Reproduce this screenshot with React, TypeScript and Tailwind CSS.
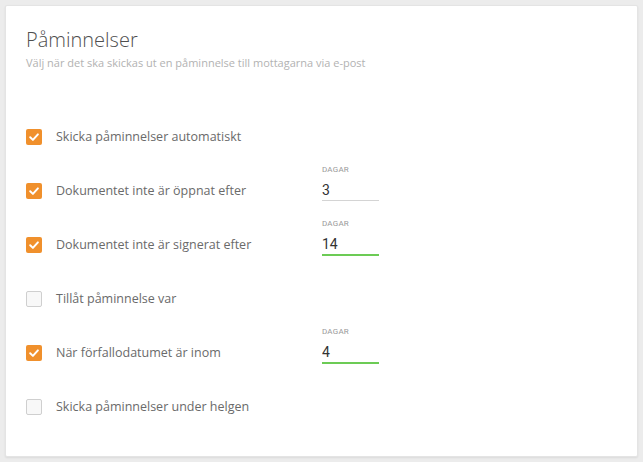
import { useState } from "react"

type Reminder = {
  id: string
  label: string
  checked: boolean
  days?: string
  active?: boolean
}

const initialReminders: Reminder[] = [
  { id: "auto", label: "Skicka påminnelser automatiskt", checked: true },
  { id: "opened", label: "Dokumentet inte är öppnat efter", checked: true, days: "3" },
  { id: "signed", label: "Dokumentet inte är signerat efter", checked: true, days: "14", active: true },
  { id: "every", label: "Tillåt påminnelse var", checked: false },
  { id: "due", label: "När förfallodatumet är inom", checked: true, days: "4", active: true },
  { id: "weekend", label: "Skicka påminnelser under helgen", checked: false },
]

function Checkbox({ checked, onChange }: { checked: boolean; onChange: () => void }) {
  return (
    <button
      type="button"
      role="checkbox"
      aria-checked={checked}
      onClick={onChange}
      className={
        checked
          ? "flex h-4 w-4 shrink-0 items-center justify-center rounded-[2px] bg-[#f0902c]"
          : "flex h-4 w-4 shrink-0 items-center justify-center rounded-[2px] border border-[#cfcfcf] bg-[#f8f8f8]"
      }
    >
      {checked ? (
        <svg viewBox="0 0 16 16" className="h-4 w-4" aria-hidden>
          <path
            d="M4.2 8.3 L6.9 10.9 L11.9 5.4"
            fill="none"
            stroke="#fff"
            strokeWidth="2"
            strokeLinecap="round"
            strokeLinejoin="round"
          />
        </svg>
      ) : null}
    </button>
  )
}

export default function App() {
  const [reminders, setReminders] = useState(initialReminders)

  function toggle(id: string) {
    setReminders((list) => list.map((r) => (r.id === id ? { ...r, checked: !r.checked } : r)))
  }

  function setDays(id: string, days: string) {
    setReminders((list) => list.map((r) => (r.id === id ? { ...r, days } : r)))
  }

  return (
    <div className="min-h-[462px] bg-[#ececec] pl-[5px] pt-[5px] font-['Open_Sans',sans-serif]">
      <div className="h-[452px] w-[633px] rounded-[2px] border border-[#e4e4e4] bg-white pl-[20px] pt-[22px] shadow-[0_1px_2px_rgba(0,0,0,0.08)]">
        <h1 className="text-[20px] font-light leading-[24px] text-[#4f4f4f]">Påminnelser</h1>
        <p className="mt-[4px] text-[11px] leading-[14px] text-[#b2b2b2]">
          Välj när det ska skickas ut en påminnelse till mottagarna via e-post
        </p>

        <div className="mt-[40px] flex flex-col">
          {reminders.map((r) => (
            <div key={r.id} className="flex h-[54px] items-center">
              <Checkbox checked={r.checked} onChange={() => toggle(r.id)} />
              <span className="ml-[14px] w-[266px] text-[12.5px] leading-[18px] text-[#6a6a6a]">{r.label}</span>
              {r.days !== undefined ? (
                <label className="mt-[1px] flex w-[57px] flex-col self-start">
                  <span className="font-['Roboto',sans-serif] text-[8px] leading-[10px] tracking-[0.2px] text-[#999]">
                    DAGAR
                  </span>
                  <input
                    value={r.days}
                    onChange={(e) => setDays(r.id, e.target.value)}
                    className={
                      r.active
                        ? "mt-[5px] h-[22px] w-full border-b-2 border-[#6ccb55] bg-transparent font-['Roboto',sans-serif] text-[14px] text-[#333] outline-none"
                        : "mt-[5px] h-[21px] w-full border-b border-[#d4d4d4] bg-transparent font-['Roboto',sans-serif] text-[14px] text-[#333] outline-none"
                    }
                  />
                </label>
              ) : null}
            </div>
          ))}
        </div>
      </div>
    </div>
  )
}
